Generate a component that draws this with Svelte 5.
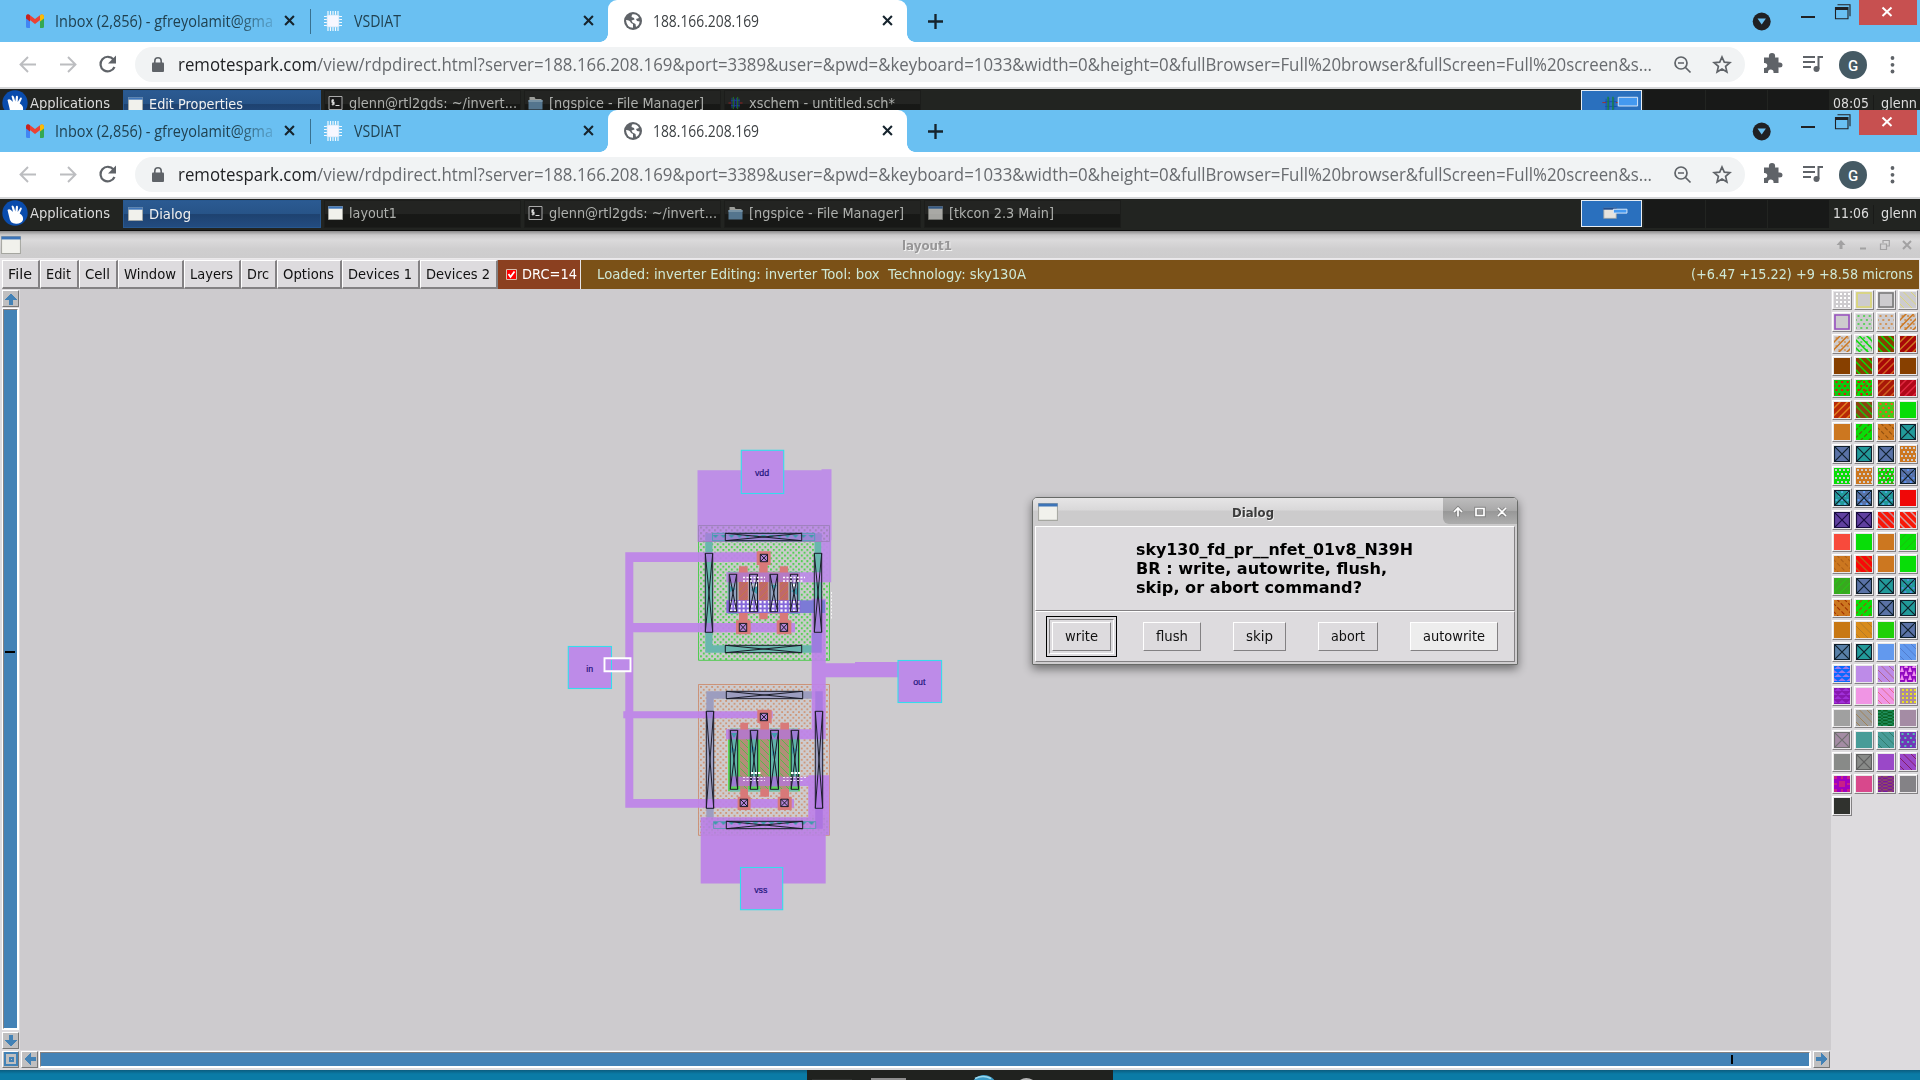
<script>
  // Scales a text run horizontally so that it fills the given width.
  function fit(node, width) {
    const natural = node.getBoundingClientRect().width;
    node.style.width = `${natural}px`;
    node.style.marginRight = `${width - natural}px`;
    node.style.transform = `scaleX(${width / natural})`;
  }

  const tasksTop = [
    { icon: 'win', label: 'Edit Properties', w: 94, active: true },
    { icon: 'term', label: 'glenn@rtl2gds: ~/invert...', w: 168 },
    { icon: 'folder', label: '[ngspice - File Manager]', w: 155 },
    { icon: 'chip', label: 'xschem - untitled.sch*', w: 146 }
  ];
  const tasksMain = [
    { icon: 'win', label: 'Dialog', w: 42, active: true },
    { icon: 'win', label: 'layout1', w: 48 },
    { icon: 'term', label: 'glenn@rtl2gds: ~/invert...', w: 168 },
    { icon: 'folder', label: '[ngspice - File Manager]', w: 155 },
    { icon: 'windim', label: '[tkcon 2.3 Main]', w: 105 }
  ];

  const menus = [
    ['File', 38, 24], ['Edit', 39, 25], ['Cell', 39, 25], ['Window', 66, 52], ['Layers', 57, 43],
    ['Drc', 36, 22], ['Options', 65, 51], ['Devices 1', 78, 64], ['Devices 2', 78, 64]
  ];

  const dialogButtons = [
    ['flush', 58, 32, ''], ['skip', 53, 27, ''], ['abort', 60, 34, ''], ['autowrite', 88, 62, 'hot']
  ];

  // [background, pattern, pattern colour, second pattern, second colour]
  const N = '#cdcbce', G = '#08dd08', O = '#cc7720', B = '#874000', T = '#229a9a', S = '#5a72a6', D = '#10202c', L = '#bd8be8';
  const palette = [
    [N, 'grid', '#fff'], [N, 'box', '#dcd870'], [N, 'box', '#777'], [N, 'thinb', '#dcd870'],
    [N, 'box', '#9850c0'], [N, 'dots', '#60d060'], [N, 'dots', '#d0955c'], [N, 'dots', '#d0955c', 'fwd', O],
    [N, 'dots', '#d0a070', 'fwd', O], [N, 'dots', '#60d060', 'back', G], [B, 'back', G], ['#a80808', 'fwd', O],
    [B], [B, 'back', G], ['#a80808', 'fwd', '#d06020'], [B],
    ['#10c810', 'dots', '#e81010'], [G, 'dots', '#e81010', 'dashf', '#805010'], ['#a81808', 'fwd', '#d06020'], ['#b00818', 'fwd', '#e02840'],
    ['#b82808', 'fwd', '#e08020'], ['#8a4410', 'back', '#20c010'], ['#48c818', 'dots', '#ff5020'], [G],
    [O], [G, 'dashf', '#606010'], [O, 'dashb', '#905010'], [T, 'x', D],
    [S, 'x', D], [T, 'x', D], [S, 'x', D], [O, 'check', N],
    [G, 'check', N], [O, 'check', N], [G, 'check', N, 'dashf', '#905020'], [S, 'dots', '#5a90f0', 'x', D],
    [T, 'dots', '#50b0e0', 'x', D], [S, 'dots', '#60a0f8', 'x', D], [T, 'dots', '#50a8e0', 'x', D], ['#f00808'],
    ['#6040a0', 'x', '#180c40'], ['#6040a0', 'x', '#180c40'], ['#f81808', 'back', '#c08890'], ['#f81808', 'back', '#d0a0a0'],
    ['#f84a3c'], [G], [O], [G, 'thinf', '#20b810'],
    [O, 'dashb', '#b06018'], ['#f80808', 'back', '#c05818'], [O], [G],
    ['#38a820', 'thinf', '#20d010'], [S, 'x', D], [T, 'x', D], [T, 'dots', '#5090e0', 'x', D],
    [O, 'dashb', '#a03000'], [G, 'dashf', '#a05010'], [S, 'x', D], [T, 'x', D],
    ['#c87814'], ['#d88c1c', 'thinb', '#b07828'], ['#20d008'], [S, 'x', D],
    ['#5880a8', 'x', D], [T, 'x', D], ['#6299ee'], ['#6299ee', 'thinb', '#5078c8'],
    ['#0868ff', 'tri', '#9a78ec'], [L], [L, 'thinb', '#b06080'], ['#9008c0', 'triv', '#f090f0'],
    ['#8818b0', 'tri', '#a030d8'], ['#f095e4'], ['#f095e4', 'thinb', '#e06880'], ['#a88aa0', 'grid', '#e8e020'],
    ['#a0a0a0'], ['#a0a0a0', 'thinb', '#a08050'], ['#209060', 'maze', '#086020'], ['#a48ca4'],
    ['#a48ca4', 'x', '#707070'], ['#489c98'], ['#489c98', 'thinb', '#307868'], ['#7038b8', 'dots', '#50c0b0'],
    ['#888a88'], ['#888a88', 'x', '#606060'], ['#9a48c8'], ['#9a48c8', 'thinb', '#801858'],
    ['#a000c0', 'ring', '#c82088'], ['#d8488c'], ['#7818a0', 'maze', '#905060'], ['#848286'],
    ['#30322e']
  ];

  const square = (x, y, s) => `M${x} ${y}h${s}v${s}h${-s}z`;
  const shapes = {
    grid: [0, 1, 2, 3].flatMap((i) => [0, 1, 2, 3].map((j) => square(2 + i * 4, 1 + j * 4, 2))).join(''),
    dots: [0, 1, 2, 3].flatMap((j) => [0, 1, 2, 3].map((i) => square(i * 5.6 + (j % 2 ? -1.3 : 1.5), 1 + j * 4, 2))).join(''),
    check: [0, 1, 2, 3].flatMap((i) => [0, 1, 2, 3].map((j) => square(1 + i * 4 + (j % 2) * 2, 1 + j * 4, 2))).join(''),
    maze: Array.from({ length: 100 }, (_, i) => (((i * i * 7 + i * 13) >> 2) % 5 < 2 ? square((i % 10) * 1.6, Math.floor(i / 10) * 1.6, 1.6) : '')).join(''),
    tri: [0, 1, 2, 3].flatMap((j) => [0, 1, 2].map((i) => `M${i * 8 - (j % 2) * 4} ${j * 4 + 3}l4 -3l4 3z`)).join(''),
    triv: [0, 1, 2, 3].flatMap((i) => [0, 1, 2].map((j) => `M${i * 4 + 2} ${j * 8 - (i % 2) * 4}l2 6h-4z`)).join(''),
    ring: 'M5 5h6v6h-6zM0 0h3v3h-3zM13 0h3v3h-3zM0 13h3v3h-3zM13 13h3v3h-3zM7 0h2v3h-2zM7 13h2v3h-2zM0 7h3v2h-3zM13 7h3v2h-3z'
  };
  const risers = 'M-1 7L7 -1M-1 14.500L14.500 -1M4 17L17 4M12 17L17 12';
  const fallers = 'M10 -1L17 6M2.500 -1L17 13.500M-1 3L13 17M-1 11L5 17';
  const strokes = {
    fwd: risers, thinf: risers, dashf: risers,
    back: fallers, thinb: fallers, dashb: fallers,
    x: 'M0 0L16 16M16 0L0 16M.5 .5h15v15h-15z',
    box: 'M1 1h14v14h-14z'
  };

  // Contact cuts: outlined boxes crossed from corner to corner.
  const upperCuts = [
    [725.3, 533.3, 76.4, 7.4], [725.3, 645.3, 76.4, 7.4], [705.3, 553.3, 7.4, 79], [814.3, 553.3, 7.4, 79],
    [729.3, 574.3, 7.4, 37.4], [749.5, 574.3, 8, 37.4], [770, 574.3, 7.6, 37.4], [790.3, 574.3, 7.4, 37.4],
    [760.3, 554.3, 7.2, 7.4], [739.3, 623.4, 7.4, 8], [780.2, 623.4, 7.4, 8]
  ];
  const lowerCuts = [
    [726.3, 691.3, 76.4, 7.4], [726.3, 821.3, 76.4, 7.4], [706.3, 711.3, 7.4, 97], [815.3, 711.3, 7.4, 97],
    [730.3, 730.3, 7.4, 59], [750.3, 730.3, 7.4, 59], [770.5, 730.3, 8, 59], [791.2, 730.3, 7.4, 59],
    [760.3, 713.3, 7.2, 7.4], [740.2, 799.2, 7.4, 7.4], [780.8, 799.2, 7.4, 7.4]
  ];
  const pins = [
    ['vdd', 741.3, 450.3, 42.4, 43.2, 762, 475.5], ['vss', 740.5, 867.5, 42.2, 42.2, 760.8, 893],
    ['in', 568.3, 646.5, 43.2, 42, 589.8, 671.5], ['out', 898, 660.5, 43.6, 42, 919.3, 684.5]
  ];
</script>

{#snippet cross()}
  <svg class="close" viewBox="0 0 10 10"><path d="M1 1L9 9M9 1L1 9" /></svg>
{/snippet}

{#snippet winIcon()}
  <svg class="wicon" viewBox="0 0 14 12" preserveAspectRatio="none"><path fill="#f1f1ec" stroke="#a5a6a0" stroke-width=".7" d="M.4 .4h13.2v11.2H.4z" /><path fill="#3d74b8" d="M.3 .3h13.4v2H.3z" /></svg>
{/snippet}

{#snippet chrome(tasks, time, top)}
  <section class="chrome" class:short={top}>
    <div class="tabs">
      <div class="tab mail">
        <svg class="gmail" viewBox="0 0 18 14"><path fill="#4285f4" d="M0 2v10.5q0 1.500 1.500 1.500H4V5z" /><path fill="#34a853" d="M18 2v10.500q0 1.500-1.500 1.500H14V5z" /><path fill="#ea4335" d="M0 3q0-3 3-2.500L9 5l6-4.500q3-.5 3 2.500L9 10z" /><path fill="#fbbc04" d="M14 1.200q4-2.500 4 1.800V4.500l-4 3z" /><path fill="#c5221f" d="M4 1.200Q0-1.300 0 3v1.500l4 3z" /></svg>
        <span class="clip"><span class="seg" use:fit={218}>Inbox (2,856) - gfreyolamit@gma</span></span>
        {@render cross()}
      </div>
      <div class="tab vsd">
        <svg class="cpu" viewBox="0 0 18 20"><path stroke="#f4faff" stroke-width="1.200" d="M4 0v20M6.500 0v20M9 0v20M11.500 0v20M14 0v20M0 5.500h18M0 8.500h18M0 11.500h18M0 14.500h18" /><path fill="#f7f7ff" stroke="#b8dcf4" stroke-width=".6" d="M3 4h12v12H3z" /></svg>
        <span class="seg" use:fit={47}>VSDIAT</span>
        {@render cross()}
      </div>
      <div class="tab on">
        <svg class="globe" viewBox="0 0 18 18"><circle cx="9" cy="9" r="9" fill="#5f6368" /><path fill="#fff" d="M2 8q4 0 5 3l2 1v3.700Q2.500 15.500 2 8M8 2.500q5-1 7 3.500l-3 1 1 2 2.700.5q-.5 4-3.700 5.500l-.5-3-3-1.500-1-2 3-1-.5-1.500L7.500 5z" /></svg>
        <span class="seg" use:fit={106}>188.166.208.169</span>
        {@render cross()}
      </div>
      <svg class="plus" viewBox="0 0 14 14"><path d="M7 0v14M0 7h14" /></svg>
      <svg class="wincontrols" viewBox="0 0 168 42"><circle cx="9.700" cy="21.500" r="9" fill="#202124" /><path fill="#6ac0f2" d="M5.500 18.500h8.400l-4.200 6z" /><path fill="#202124" d="M49 16h14v2H49zM83 7h13v3H83z" /><path fill="none" stroke="#202124" stroke-width="1.100" d="M83.500 7.500h12.500v11.200H83.500zM85.500 4.700h12.500v11.500" /><path fill="#c75050" d="M107 0h58v25h-58z" /><path stroke="#fff" stroke-width="2" d="M130.500 7.500l9 8.500M139.500 7.500l-9 8.500" /></svg>
    </div>
    <div class="toolbar">
      <svg class="nav" viewBox="0 0 135 45"><g fill="none" stroke="#bcbdc0" stroke-width="1.900"><path d="M36 22.500H21M28 15l-7.500 7.500L28 30M60 22.500h15M68 15l7.500 7.500L68 30" /><path stroke="#5f6368" stroke-width="2.200" d="M113.500 17.500a7.300 7.300 0 1 0 1 7.500" /></g><path fill="#5f6368" d="M116 13.500v8h-8z" /></svg>
      <div class="omni">
        <svg class="lock" viewBox="0 0 12 15"><path fill="#5f6368" d="M1 5.500h10q1 0 1 1v7.500q0 1-1 1H1q-1 0-1-1V6.500q0-1 1-1" /><path fill="none" stroke="#5f6368" stroke-width="1.600" d="M2.800 6V4a3.200 3.200 0 0 1 6.400 0v2" /></svg>
        <span class="url" use:fit={1474}><b>remotespark.com</b>/view/rdpdirect.html?server=188.166.208.169&amp;port=3389&amp;user=&amp;pwd=&amp;keyboard=1033&amp;width=0&amp;height=0&amp;fullBrowser=Full%20browser&amp;fullScreen=Full%20screen&amp;s...</span>
        <svg class="acts" viewBox="0 0 60 20"><g fill="none" stroke="#5f6368" stroke-width="1.700"><circle cx="7" cy="8" r="6" /><path d="M11.500 12.500l5 5M4 8h6" /><path d="M48 2l2.300 5.200 5.600.5-4.300 3.700 1.300 5.500-4.900-2.900-4.900 2.900 1.300-5.500-4.300-3.700 5.600-.5z" /></g></svg>
      </div>
      <svg class="ext" viewBox="0 0 175 45"><g fill="#5f6368"><path d="M20 15.500h4q-.8-4.500 3-4.500t3 4.500h3.500v5q4-.6 4 2.400t-4 2.400v5.700h-5q.4-3.500-2.700-3.500T23 31h-4v-5q3.300.2 3.300-2.500T19 21v-5.500z" /><path d="M58 14h12v2H58zM58 19h12v2H58zM58 24h8v2h-8zM72.500 14h5.500v2h-3.500v11h-2z" /><circle cx="71.500" cy="27" r="3" /><circle cx="147.500" cy="16" r="1.900" /><circle cx="147.500" cy="22.800" r="1.900" /><circle cx="147.500" cy="29.500" r="1.900" /></g><circle cx="108" cy="23" r="14" fill="#455a64" /><text x="108" y="28.500" text-anchor="middle">G</text></svg>
    </div>
    <div class="taskbar">
      <div class="apps">
        <svg class="mouse" viewBox="0 0 26 26"><circle cx="13" cy="13" r="12.700" fill="#0a4cac" /><path fill="#fff" d="M5.500 10q2-2 4.500 1l1 1-1.500-6q1.500-1.500 2.500 1l1.300 4.500L14 6q1.800-1 2 1l-.3 5L18.500 7.500q1.800-.3 1.200 1.500l-2 4.500q4 2 3.300 6.500-2 4-7 3.700-6-.5-6.500-5.500z" /></svg>
        <span use:fit={80}>Applications</span>
      </div>
      {#each tasks as t}
        <div class="task" class:active={t.active}>
          {#if t.icon === 'term'}
            <svg class="ticon" viewBox="0 0 14 14"><path fill="#1b1b1b" stroke="#aaa" d="M.5 .5h13v13H.5z" /><path fill="none" stroke="#ddd" stroke-width="1.100" d="M5.500 4.300h-2v2h2v2h-2.300M4.400 3v6.500M7 9.500h4" /></svg>
          {:else if t.icon === 'folder'}
            <svg class="ticon" viewBox="0 0 14 14"><path fill="#9a9c98" d="M1 1h5l1 2h6v9H1z" /><path fill="#54758e" d="M0 4h14v9.500H0z" /><path fill="#7893a5" d="M0 4h14v2H0z" /></svg>
          {:else if t.icon === 'chip'}
            <svg class="ticon" viewBox="0 0 16 16"><path fill="none" stroke="#1c3d9c" d="M4 2v12M7 3v10M9 2v12M12 3v10M3 5h10M3 11h10" /><path stroke="#228022" d="M5.500 1v14M10.500 1v14" /><path stroke="#a02020" d="M0 8h3M13 8h3" /></svg>
          {:else}
            <span class="ticon" class:dim={t.icon === 'windim'}>{@render winIcon()}</span>
          {/if}
          <span use:fit={t.w}>{t.label}</span>
        </div>
      {/each}
      <div class="pager">
        <div class="desk cur">
          {#if top}
            <svg viewBox="0 0 61 26"><path fill="none" stroke="#1850b0" d="M25 8v12M28 7v12M33 7v12M24 11h12M24 16h12" /><path stroke="#188040" stroke-width="1.500" d="M27 6v14M32 6v14" /><path stroke="#a03030" d="M21 12h4M35 12h3" /><path fill="#4499f0" stroke="#dce8f8" d="M37.500 6.500h20v9h-20z" /></svg>
          {:else}
            <svg viewBox="0 0 61 26"><path fill="#e6e3dd" stroke="#8a9aa8" d="M22.500 7.500h13v10.500h-13z" /><path fill="#234f90" d="M22 7h14v2H22z" /><path fill="#4499f0" stroke="#dce8f8" d="M32.500 8.500h14v4h-14z" /></svg>
          {/if}
        </div>
        <div class="desk"></div><div class="desk"></div><div class="desk"></div>
      </div>
      <span class="clock"><span use:fit={36}>{time}</span></span>
      <span class="user"><span use:fit={36}>glenn</span></span>
    </div>
  </section>
{/snippet}

{#snippet cut(c)}
  <path d={`M${c[0]} ${c[1]}h${c[2]}v${c[3]}h${-c[2]}zM${c[0]} ${c[1]}l${c[2]} ${c[3]}M${c[0] + c[2]} ${c[1]}l${-c[2]} ${c[3]}`} />
{/snippet}

{#snippet arrow(d)}
  <span class="arrow"><svg viewBox="0 0 14 14" shape-rendering="crispEdges"><path fill="#4382b6" {d} /></svg></span>
{/snippet}

<main>
  {@render chrome(tasksTop, '08:05', true)}
  {@render chrome(tasksMain, '11:06', false)}

  <div class="title">
    <span class="ticon big">{@render winIcon()}</span>
    <span class="name"><span use:fit={50}>layout1</span></span>
    <svg class="ctl" viewBox="0 0 80 16"><path fill="#a2a1a2" d="M7 3l4.500 5H8.500v4h-3V8H2.500zM26 10.500h6v2h-6z" /><path fill="none" stroke="#a2a1a2" stroke-width="1.200" d="M46.500 7h6v5.500h-6zM49 6V3.500h6.300V9H53" /><path stroke="#a2a1a2" stroke-width="2" d="M69 4l8 8M77 4l-8 8" /></svg>
  </div>

  <nav>
    {#each menus as [label, w, tw]}
      <div class="menu" style:width="{w}px"><span use:fit={tw}>{label}</span></div>
    {/each}
    <div class="drc">
      <svg viewBox="0 0 11 11"><path fill="#f00" stroke="#d8c0b0" d="M.5 .5h10v10H.5z" /><path fill="none" stroke="#fff" stroke-width="1.800" d="M2.500 5l2 3 4-5.500" /></svg>
      <span use:fit={55}>DRC=14</span>
    </div>
    <div class="status">
      <span use:fit={429}>Loaded: inverter Editing: inverter Tool: box&nbsp; Technology: sky130A</span>
      <span use:fit={222}>(+6.47 +15.22) +9 +8.58 microns</span>
    </div>
  </nav>

  <div class="work">
    <div class="left">
      {@render arrow('M7 1l6 7H9v5H5V8H1z')}
      <div class="trough vert"><i></i></div>
      {@render arrow('M7 13l6-7H9V1H5v5H1z')}
    </div>

    <svg class="canvas" viewBox="20 289 1811 761">
      <defs>
        <pattern id="gd" width="5.6" height="5.6" patternUnits="userSpaceOnUse" x="700" y="526.500"><path fill="#54cf54" d="M0 0h2v2H0zM2.800 2.800h2v2h-2z" /></pattern>
        <pattern id="bd" width="5.6" height="5.6" patternUnits="userSpaceOnUse" x="700" y="686"><path fill="#cf987a" d="M0 0h1.900v1.900H0zM2.800 2.800h1.900v1.900h-1.900z" /></pattern>
        <pattern id="pd" width="5.6" height="5.6" patternUnits="userSpaceOnUse" x="700" y="526.500"><path fill="#a384bd" d="M0 0h2v2H0zM2.800 2.800h2v2h-2z" /></pattern>
        <pattern id="wd" width="4.200" height="4.200" patternUnits="userSpaceOnUse" x="730" y="601"><rect width="2.200" height="2.200" fill="#fff" /></pattern>
        <pattern id="pf" width="7" height="7" patternUnits="userSpaceOnUse"><path stroke="#c87838" stroke-width=".8" d="M0 7L7 0" /></pattern>
        <pattern id="pb" width="7" height="7" patternUnits="userSpaceOnUse"><path stroke="#4ebd45" stroke-width=".9" d="M0 0L7 7" /></pattern>
        <pattern id="tt" width="8" height="7" patternUnits="userSpaceOnUse" x="712.500" y="535"><path fill="#3f9bac" d="M0 0h6l-3 3z" /></pattern>
      </defs>

      <!-- upper device -->
      <path fill="url(#gd)" stroke="#52cb52" stroke-width="1" d="M698.500 525.500h131v134.800h-131z" />
      <path fill="#69b6ae" fill-rule="evenodd" d="M705.300 533.300h116.400v119.400H705.300zM712.500 540.700v104.500h102V540.700z" />
      <path fill="#bd8be8" fill-opacity=".95" d="M697.500 470.300h124v-1h10v71h-.3v42h-105v-10h95V541.700h-123.700z" />
      <path fill="url(#pd)" stroke="#9a7fb8" stroke-width=".8" d="M698.500 525.500h131v16h-131z" />
      <path fill="#9d86d4" d="M705.300 533.300h116.400v7.400H705.300z" />
      <path fill="url(#tt)" stroke="#3fa3ad" stroke-width=".8" d="M712.500 533.300h102.200v7.400H712.500z" />

      <!-- lower device -->
      <path fill="url(#bd)" stroke="#cc8d70" stroke-width=".9" d="M698.500 684.500h131v150.800h-131z" />
      <path fill="#9c9dbf" fill-rule="evenodd" d="M706.300 691.300H823v137.400H706.300zM713.700 698.700v122.600h102V698.700z" />
      <path fill="#bd83e8" fill-opacity=".94" d="M700.700 817.300h107.600v-42h21v60h-3.600v48.200h-125z" />
      <path fill="url(#pd)" opacity=".45" d="M700.700 817.300h128.600v18H700.700z" />
      <path fill="#ad75e0" d="M815.300 775.300h7.400v53.400h-7.400z" />
      <path fill="url(#tt)" stroke="#5598b0" stroke-width=".8" d="M713.500 821.500h102.200v7H713.500z" />

      <!-- diffusion and gates -->
      <path fill="#6eb3b0" d="M727.700 571.700H800V614h-72.300z" />
      <path fill="#b99ba0" d="M737.500 571.700h52V614h-52z" />
      <path fill="#5ad455" d="M728 729h72v62.300h-72z" />
      <path stroke="#72bdb0" stroke-width="2" fill="none" d="M730 729.500h68M730 790.500h68" />

      <g fill="#bd83e8" fill-opacity=".93">
        <path d="M625.300 552.300H770v9.700H633.300v61H795v9.300H633.300v79h139.400v7h-139.400v80.700H794v8.700H625.300v-89.400h-2v-7h2z" />
        <path d="M604 659h22v12h-22z" />
        <path d="M811.700 598.700h14v64.600H855v-1.300h43v15.300h-72.300v62H726v-10h85.700z" />
        <path d="M730 776.700h79v9.300h-79z" />
      </g>
      <g fill="#d87979">
        <path d="M756.700 551.300h14V565h-3v54.300h-8.400V565h-2.600z" />
        <path d="M739 566.300h8.700v54h3v14H736v-14h3zM779.700 566.300h8.300v54h3.300v14h-14.600v-14h3z" />
        <path d="M757.300 709.700h14.400V723H769v73.700h-8.700V723h-3z" />
        <path d="M740.300 722.700h7.700v74h2.600V810h-13v-13.300h2.700zM780.300 722.700h8.700v74h2.700V810h-14v-13.300h2.600z" />
      </g>
      <g fill="#bf686a"><path d="M739 582h8.700v18H739zM759.300 582h8.400v18h-8.400zM779.700 582h8.300v18h-8.300z" /></g>
      <path fill="url(#pf)" d="M739 582h8.700v18H739zM759.300 582h8.400v18h-8.400zM779.700 582h8.300v18h-8.300z" />
      <path fill="#b38d79" d="M740.300 739h7.700v50h-7.700zM760.300 739h8.700v50h-8.700zM780.300 739h8.700v50h-8.700z" />
      <path fill="url(#pb)" d="M740.300 739h7.700v50h-7.700zM760.300 739h8.700v50h-8.700zM780.300 739h8.700v50h-8.700z" />
      <path fill="#b57ac5" d="M728 572.500h72V582h-72zM728 729.500h72v9.800h-72zM730 776.700h70v9.300h-70z" />

      <!-- contact fills -->
      <path fill="#a17fd0" d="M729.300 574.300h7.400v38h-7.400zM749.500 574.300h8v38h-8zM770 574.300h7.600v38H770zM790.300 574.300h7.400v38h-7.400z" />
      <path fill="#8fa0bc" d="M729.300 583h7.400v17h-7.400zM749.500 583h8v17h-8zM770 583h7.600v17H770zM790.300 583h7.400v17h-7.400z" />
      <path fill="#3f9bac" d="M730 586l6 3-6 3zM757 586l-6 4 6 4zM771 585h6l-3 5zM797 588l-6 3 6 4z" />
      <path fill="#60b3a8" d="M730.300 739h7.400v37h-7.400zM750.300 739h7.400v37h-7.400zM770.500 739h8v37h-8zM791.200 739h7.400v37h-7.400z" />
      <path fill="#9c7cd4" d="M730.300 730.300h7.400v9h-7.400zM750.300 730.300h7.400v9h-7.400zM770.500 730.300h8v9h-8zM791.200 730.300h7.400v9h-7.400zM730.300 776.500h7.400v10h-7.400zM750.300 776.500h7.400v10h-7.400zM770.500 776.500h8v10h-8zM791.200 776.500h7.400v10h-7.400z" />
      <path fill="#3f9bac" d="M731 733h6l-3 5zM771 733h7l-3.500 5zM751 745l6 4-6 4zM792 747l6 3-6 4zM731 747l6 3-6 3zM772 750l5 3-5 3z" />
      <path fill="#7c7ad6" d="M800 600.300h25V613h-25z" />
      <path fill="#8568da" d="M726.300 600.300h74V613h-74z" />
      <path fill="url(#wd)" d="M730 601h71v12h-71zM750 583h8v5h-8zM791 583h7v5h-7z" />
      <path fill="#a17fd8" d="M814.300 598.700h7.400v34h-7.400zM706.300 711.300h7.400v7h-7.400zM705.300 553.300h7.400v8.700h-7.400zM705.300 623h7.400v9.300h-7.400z" />
      <path fill="#a97ae0" d="M815.300 691.300h7.400v47.700h-7.400z" />
      <path fill="#9d7cdf" d="M811.700 633h10v19.700h-10z" />
      <path fill="#b283d5" d="M760.300 554.300h7.200v7.400h-7.200zM739.300 623.400h7.400v8h-7.400zM780.200 623.400h7.400v8h-7.400zM760.300 713.300h7.200v7.400h-7.200zM740.200 799.200h7.400v7.400h-7.400zM780.800 799.200h7.400v7.400h-7.400z" />

      <g fill="none" stroke="#1a1c28" stroke-width="1">
        {#each upperCuts as c}{@render cut(c)}{/each}
        {#each lowerCuts as c}{@render cut(c)}{/each}
      </g>

      <g stroke="#fff" fill="none">
        <path stroke-dasharray="2 1.500" stroke-width="1.400" d="M743 577.500h22M783 577.500h22M743 581h22M783 581h20" />
        <path stroke-dasharray="2.500 1" stroke-width="2" d="M751 773h10M791 773h9" />
        <path stroke-dasharray="2 1.500" stroke-width=".8" d="M743 777.500h22M783 777.500h23M743 780.500h22M783 780.500h20M831.500 592v28" />
      </g>

      {#each pins as [label, x, y, w, h, tx, ty]}
        <rect {x} {y} width={w} height={h} fill="#bd8be8" stroke="#35dcec" stroke-width="1.100" />
        <text x={tx} y={ty} text-anchor="middle">{label}</text>
      {/each}
      <path fill="#bd8be8" stroke="#fff" stroke-width="1.900" d="M604.500 658.200h26v13h-26z" />
      <path stroke="#35dcec" d="M611.500 660v10" />
    </svg>

    <div class="palette">
      {#each palette as [bg, p1, c1, p2, c2]}
        <span class="sw">
          <svg viewBox="0 0 16 16">
            <rect width="16" height="16" fill={bg} />
            {#each [[p1, c1], [p2, c2]] as [p, c]}
              {#if p && shapes[p]}<path d={shapes[p]} fill={c} />
              {:else if p}<path d={strokes[p]} fill="none" stroke={c} class={p} />{/if}
            {/each}
          </svg>
        </span>
      {/each}
    </div>
  </div>

  <div class="bottom">
    <span class="arrow"><svg viewBox="0 0 14 14" shape-rendering="crispEdges"><path fill="none" stroke="#4382b6" stroke-width="2.500" d="M1.200 1.200h11.600v11.600H1.200z" /><path fill="none" stroke="#4382b6" stroke-width="2" d="M5.500 5.500h3v3h-3z" /></svg></span>
    {@render arrow('M1 7l7-6v4h5v4H8v4z')}
    <div class="trough horiz"><i></i></div>
    {@render arrow('M13 7L6 1v4H1v4h5v4z')}
  </div>

  <footer>
    <svg viewBox="0 0 306 10"><path fill="#20221f" d="M0 0h306v10H0z" /><path fill="#303230" d="M5 9h40v1H5z" /><path fill="#8e8e8e" d="M64 8h35v2H64z" /><circle cx="177" cy="18" r="13" fill="#3c9cc8" /><path stroke="#9ad8ee" stroke-width="1.500" fill="none" d="M168 8.500q8-4 16 0" /><path fill="#b4b4b4" d="M213 10q6-4 13 0z" /></svg>
  </footer>

  <div class="dialog">
    <header>
      <span class="ticon big">{@render winIcon()}</span>
      <strong><span use:fit={42}>Dialog</span></strong>
      <svg class="dctl" viewBox="0 0 74 26"><g stroke="#858585" stroke-width="3.500" fill="none"><path d="M15 9.500V19M11 14l4-4 4 4M33 10.500h8v7h-8zM55.500 10.500l7 7.500M62.500 10.500l-7 7.500" /></g><g stroke="#fff" stroke-width="1.700" fill="none"><path d="M15 10v8.500M11 14l4-4 4 4M33 10.500h8v7h-8zM55 10l8 8M63 10l-8 8" /></g></svg>
    </header>
    <div class="msg">
      <span use:fit={277}>sky130_fd_pr__nfet_01v8_N39H</span>
      <span use:fit={251}>BR : write, autowrite, flush,</span>
      <span use:fit={226}>skip, or abort command?</span>
    </div>
    <div class="btns">
      <div class="ring"><div class="sunk"><div class="btn first"><span use:fit={33}>write</span></div></div></div>
      {#each dialogButtons as [label, w, tw, kind]}
        <div class="btn {kind}" style:width="{w}px"><span use:fit={tw}>{label}</span></div>
      {/each}
    </div>
  </div>
</main>

<style>
  :global(body) { overflow: hidden; background: #cdcbce; }
  main { width: 1920px; height: 1080px; overflow: hidden; display: flex; flex-direction: column; position: relative; font: 14px/1.2 'DejaVu Sans', sans-serif; color: #111; }
  svg { display: block; flex: none; }
  span { white-space: pre; flex: none; }
  main :global(span[style]) { display: inline-block; transform-origin: 0 50%; }

  .chrome { height: 121px; flex: none; overflow: hidden; }
  .chrome.short { height: 110px; }
  .tabs { height: 42px; background: #6ac0f2; display: flex; align-items: center; font: 15.500px/20px 'Open Sans', sans-serif; color: #20404f; }
  .tab { display: flex; align-items: center; height: 42px; box-sizing: border-box; padding-bottom: 1px; }
  .mail { width: 311px; padding-left: 26px; background: linear-gradient(#38708f, #38708f) right 9px / 1px 25px no-repeat; }
  .gmail { width: 18px; height: 14px; margin-right: 11px; }
  .clip { width: 218px; overflow: hidden; margin-right: 11px; mask-image: linear-gradient(90deg, #000 82%, #0003); }
  .seg { display: inline-block; }
  .close { width: 11px; height: 11px; }
  .close path { stroke: #16242e; stroke-width: 1.900; }
  .vsd { width: 297px; padding-left: 13px; }
  .cpu { width: 18px; height: 20px; margin-right: 12px; }
  .vsd .close { margin-left: 182px; }
  .on { width: 299px; background: #fff; border-radius: 9px 9px 0 0; padding-left: 16px; position: relative; color: #3c4043; }
  .on::before, .on::after { content: ''; position: absolute; bottom: 0; width: 8px; height: 8px; }
  .on::before { left: -8px; background: radial-gradient(circle at 0 0, #6ac0f2 7.500px, #fff 8px); }
  .on::after { right: -8px; background: radial-gradient(circle at 100% 0, #6ac0f2 7.500px, #fff 8px); }
  .globe { width: 18px; height: 18px; margin-right: 11px; }
  .on .close { margin-left: 123px; }
  .plus { width: 15px; height: 15px; margin-left: 21px; }
  .plus path { stroke: #16242e; stroke-width: 2.200; }
  .wincontrols { width: 168px; height: 42px; margin-left: auto; }

  .toolbar { height: 45px; background: #fff; border-bottom: 2px solid #d6d7d9; display: flex; align-items: center; }
  .nav { width: 135px; height: 45px; }
  .omni { width: 1610px; height: 35px; border-radius: 18px; background: #f1f3f4; display: flex; align-items: center; }
  .lock { width: 12px; height: 15px; margin: 0 14px 0 17px; }
  .url { font: 18.400px/30px 'Open Sans', sans-serif; color: #686b6f; display: inline-block; margin-bottom: 1px; }
  .url b { font-weight: 400; color: #202124; }
  .acts { width: 60px; height: 20px; margin-left: 22px; }
  .ext { width: 175px; height: 45px; }
  .ext text { font: 500 15px Roboto, sans-serif; fill: #fff; }

  .taskbar { height: 31px; background: #222421; border-bottom: 1px solid #0e0e0e; display: flex; align-items: center; color: #aeb0ad; }
  .apps { width: 123px; display: flex; align-items: center; gap: 2px; padding-left: 2px; box-sizing: border-box; color: #dcdcdc; padding-bottom: 3px; }
  .mouse { width: 26px; height: 26px; }
  .task { width: 197px; margin-right: 3px; height: 28px; margin-bottom: 1px; box-sizing: border-box; border: 1px solid #1c1d1b; background: linear-gradient(#232422 50%, #171816 52%); display: flex; align-items: center; padding: 0 0 2px 3px; }
  .task.active { width: 198px; background: linear-gradient(#2b5a92, #275488 50%, #1e4270 52%, #234c80); border-color: #28588f; color: #f1f1f1; padding-bottom: 0; padding-left: 4px; }
  .ticon { width: 15px; height: 14px; margin-right: 6px; display: block; }
  .wicon { width: 100%; height: 100%; }
  .dim { opacity: .65; }
  .pager { display: flex; margin-left: auto; margin-right: -1px; height: 28px; margin-bottom: 1px; }
  .desk { width: 61px; margin-right: 1px; background: #181918; }
  .cur { background: #2a70be; border: 1px solid #e8eef4; width: 59px; height: 25px; overflow: hidden; margin-right: 2px; }
  .clock { width: 40px; padding-left: 4px; color: #ddd; padding-bottom: 3px; }
  .user { width: 39px; padding-left: 7px; border-left: 1px solid #191a18; color: #ddd; padding-bottom: 3px; }

  .title { height: 28px; flex: none; background: linear-gradient(#8b8a8b, #cbcacb 4px, #dbdadb 9px, #cfcecf 18px, #cdcccd); border-bottom: 1px solid #ebe9eb; box-sizing: border-box; display: flex; align-items: center; }
  .big { width: 20px; height: 18px; margin: 0 0 0 1px; }
  .name { margin: 2px 0 0 881px; font: bold 12.500px 'DejaVu Sans', sans-serif; color: #969596; text-shadow: 1px 1px #f2f2f2; }
  .ctl { width: 80px; height: 16px; margin-left: auto; margin-right: 6px; }

  nav { height: 30px; flex: none; background: #e6e4e7; display: flex; align-items: stretch; padding: 1px 1px 0 2px; box-sizing: border-box; }
  .menu { box-sizing: border-box; background: #dddbde; border: 1px solid #fff; border-right: 2px solid #838183; border-bottom: 2px solid #838183; display: flex; align-items: center; justify-content: center; padding-right: 1px; flex: none; }
  .drc { width: 82px; box-sizing: border-box; background: #8b4020; color: #fff; display: flex; align-items: center; padding-left: 8px; gap: 5px; margin-right: 1px; }
  .drc svg { width: 11px; height: 11px; }
  .status { flex: 1; background: #7b5117; color: #cfe8d6; display: flex; align-items: center; justify-content: space-between; padding: 0 6px 0 16px; }

  .work { display: flex; height: 761px; flex: none; }
  .left { width: 20px; background: #dddbde; display: flex; flex-direction: column; padding: 1px 0 1px 2px; box-sizing: border-box; gap: 1px; }
  .arrow { width: 17px; height: 17px; box-sizing: border-box; border: 1px solid #fff; border-right: 1.500px solid #777; border-bottom: 1.500px solid #777; padding: .5px; background: #c0bfc0; flex: none; display: block; }
  .arrow svg { width: 14px; height: 14px; }
  .trough { flex: 1; background: #4382b6; border: 1px solid #838183; border-right-color: #fff; border-bottom-color: #fff; outline: 1px solid #fff; position: relative; }
  .trough i { position: absolute; background: #000; }
  .vert { margin: 1px 2px 2px 1px; }
  .vert i { left: 1px; top: 341px; width: 10px; height: 2px; }
  .horiz { height: 13px; margin: 1px 1px 0 0; }
  .horiz i { left: 1690px; top: 2px; width: 2px; height: 9px; }
  .canvas { width: 1811px; height: 761px; background: #cdcbce; }
  .canvas text { font: 8.800px 'Liberation Sans', sans-serif; fill: #1d137c; stroke: #1d137c; stroke-width: .2px; }
  .palette { width: 89px; background: #dddbde; display: grid; grid-template-columns: repeat(4, 20px); grid-auto-rows: 20px; gap: 2px; padding: 1px 0 0 1px; box-sizing: border-box; align-content: start; }
  .sw { border: 1px solid #fff; border-right: 1px solid #838183; border-bottom: 1px solid #838183; padding: 1px; background: #e8e6e8; width: 16px; height: 16px; }
  .sw svg { width: 16px; height: 16px; overflow: hidden; }
  .fwd, .back { stroke-width: 1.500; }
  .thinf, .thinb { stroke-width: .9; }
  .x { stroke-width: 1.200; }
  .box { stroke-width: 1.600; }
  .dashf, .dashb { stroke-width: 1.100; stroke-dasharray: 4 2; }
  .bottom { height: 20px; flex: none; background: #dddbde; display: flex; align-items: center; gap: 2px; padding: 0 90px 2px 2px; box-sizing: border-box; }
  footer { height: 10px; background: linear-gradient(#0b5d80, #0b7ba6 4px); padding-left: 807px; flex: none; }
  footer svg { width: 306px; height: 10px; }

  .dialog { position: absolute; left: 1032px; top: 497px; width: 486px; height: 168px; box-sizing: border-box; border: 1px solid #686a68; border-radius: 5px 5px 1px 1px; background: #cfcdcf; padding: 0 2px 2px; display: flex; flex-direction: column; box-shadow: 0 4px 10px #0007; }
  header { height: 28px; display: flex; align-items: center; background: linear-gradient(#e6e5e6, #d9d8d9 12px, #cccbcc 13px, #cccbcc); margin: 0 -2px; border-radius: 4px 4px 0 0; overflow: hidden; flex: none; }
  header .big { margin-left: 5px; }
  header strong { margin-left: 174px; font-size: 12.500px; color: #3c3c3c; text-shadow: 1px 1px #f4f4f4; }
  .dctl { width: 74px; height: 26px; margin: 0 0 2px auto; background: linear-gradient(#bdbcbd, #a8a8a8 50%, #989898 52%, #adadad); border-bottom-left-radius: 6px; }
  .msg, .btns { border: 1px solid #fff; border-right-color: #838183; border-bottom-color: #838183; background: #dddbde; box-sizing: border-box; }
  .msg { height: 85px; display: flex; flex-direction: column; padding: 14px 0 0 100px; font: bold 15.500px/19px 'DejaVu Sans', sans-serif; color: #000; align-items: flex-start; }
  .btns { flex: 1; display: flex; align-items: center; padding: 0 16px 0 10px; justify-content: space-between; }
  .ring { border: 1px solid #000; padding: 2px; margin-right: -6px; }
  .sunk { border: 1px solid #838183; border-right-color: #fff; border-bottom-color: #fff; padding: 2px; }
  .btn { height: 29px; box-sizing: border-box; border: 1px solid #fff; border-right-color: #838183; border-bottom-color: #838183; display: flex; align-items: center; justify-content: center; }
  .first { width: 59px; }
  .hot { background: #ededed; }
</style>
